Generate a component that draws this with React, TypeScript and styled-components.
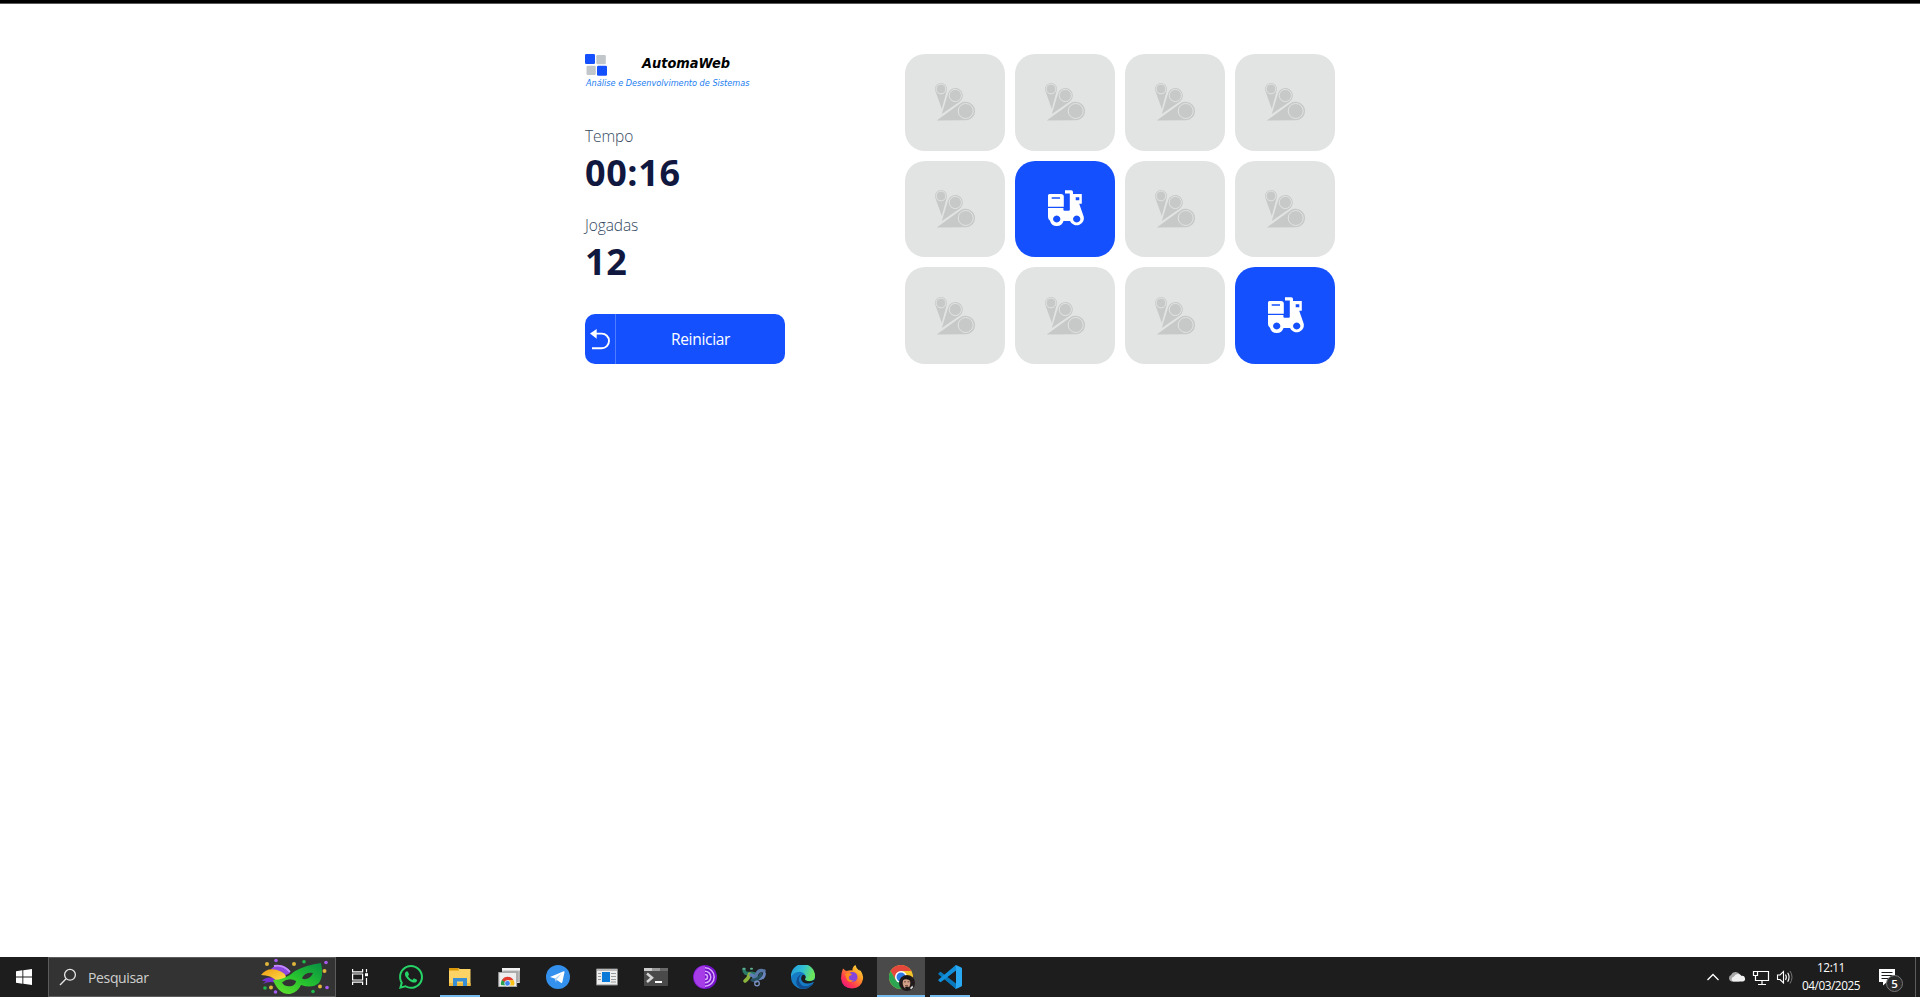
import React from 'react';
import styled, { createGlobalStyle } from 'styled-components';
import { FaWhatsapp } from 'react-icons/fa';

const GlobalStyle = createGlobalStyle`
  * { box-sizing: border-box; }
  body {
    margin: 0;
    background: #fff;
    font-family: 'Open Sans', 'Noto Sans', sans-serif;
    overflow: hidden;
  }
  svg { display: block; flex: none; }
`;

const Screen = styled.div`
  display: flex;
  flex-direction: column;
  height: 997px;
  border-top: 3px solid #000;
`;

const Page = styled.main`
  flex: 1;
  border-top: 1px solid #5a5a5a;
  padding-top: 50px;
`;

const Game = styled.div`
  width: 750px;
  height: 310px;
  margin: 0 auto;
  display: flex;
  justify-content: space-between;
`;

const Info = styled.section`
  width: 200px;
  display: flex;
  flex-direction: column;
`;

const Stats = styled.div`
  flex: 1;
  margin-top: 35px;
`;

const Stat = styled.div`
  height: 89px;
`;

const StatLabel = styled.p`
  margin: 0;
  font-size: 15.5px;
  line-height: 23px;
  font-weight: 300;
  color: #34495e;
  letter-spacing: -0.1px;
`;

const StatValue = styled.p`
  margin: 0;
  font-size: 36px;
  line-height: 49px;
  font-weight: 700;
  color: #101840;
  letter-spacing: 0.6px;
`;

const RestartButton = styled.button`
  display: flex;
  height: 50px;
  width: 200px;
  padding: 0;
  border: 0;
  border-radius: 10px;
  background: #1550ff;
  color: #fff;
  font: 400 15.5px/51px 'Open Sans', 'Noto Sans', sans-serif;
  letter-spacing: -0.3px;
  overflow: hidden;
`;

const ButtonIcon = styled.span`
  width: 31px;
  height: 50px;
  border-right: 1px solid #4f7dff;
  display: flex;
  align-items: center;
`;

const ButtonLabel = styled.span`
  flex: 1;
  text-align: center;
`;

const Board = styled.section`
  display: grid;
  grid-template-columns: repeat(4, 100px);
  grid-template-rows: repeat(3, 1fr);
  gap: 10px;
`;

const Card = styled.div<{ $open: boolean }>`
  display: flex;
  align-items: center;
  justify-content: center;
  border-radius: 20px;
  background: ${(p) => (p.$open ? '#1550ff' : '#e2e4e3')};
`;

const Taskbar = styled.footer`
  display: flex;
  height: 40px;
  background: #1d1d1d;
  color: #fff;
`;

const StartButton = styled.div`
  width: 48px;
  display: flex;
  align-items: center;
  justify-content: center;
`;

const Search = styled.div`
  width: 288px;
  display: flex;
  align-items: center;
  border: 1px solid #5c5c5c;
  background: #333;
  padding: 0 4px 0 10px;
`;

const SearchText = styled.span`
  flex: 1;
  padding-left: 11px;
  font-size: 14px;
  font-weight: 400;
  letter-spacing: -0.35px;
  color: #cfcfcf;
`;

const TaskView = styled.div`
  width: 51px;
  padding-right: 3px;
  display: flex;
  align-items: center;
  justify-content: center;
`;

const Apps = styled.div`
  display: flex;
  gap: 1px;
`;

const TaskbarApp = styled.div<{ $active?: boolean; $running?: boolean }>`
  width: 48px;
  height: 40px;
  display: flex;
  flex-direction: column;
  align-items: center;
  padding-top: 8px;
  background: ${(p) => (p.$active ? '#4a4a4a' : 'transparent')};
  &::after {
    content: '';
    margin-top: 6px;
    height: 2px;
    width: ${(p) => (p.$active ? 48 : 40)}px;
    background: ${(p) => (p.$active || p.$running ? '#76b9ed' : 'transparent')};
  }
`;

const Tray = styled.div`
  margin-left: auto;
  display: flex;
  align-items: center;
`;

const Clock = styled.div`
  width: 72px;
  margin: -3px 0 0 1px;
  text-align: center;
  font-size: 11.8px;
  line-height: 18px;
  letter-spacing: -0.45px;
  white-space: nowrap;
`;

const Notice = styled.div`
  position: relative;
  width: 29px;
  height: 40px;
  margin-left: 9px;
  padding: 11px 0 0 3px;
`;

const NoticeCount = styled.span`
  position: absolute;
  left: 10px;
  top: 18px;
  width: 17px;
  height: 17px;
  border: 1px solid #777;
  border-radius: 50%;
  background: #2b2b2b;
  font-size: 11.5px;
  font-weight: 600;
  line-height: 15px;
  text-align: center;
`;

const DesktopEdge = styled.div`
  width: 5px;
  height: 40px;
  margin-left: 10px;
  border-left: 1px solid #5c5c5c;
`;

const Logo = () => (
  <svg width="200" height="36" viewBox="0 0 200 36">
    <rect x="0" y="0" width="10" height="10" rx="1.3" fill="#1550ff" />
    <rect x="11.3" y="1" width="9.5" height="9.3" rx="1.3" fill="#c1c6cb" />
    <rect x="1.5" y="11.7" width="9.3" height="9.3" rx="1.3" fill="#c1c6cb" />
    <rect x="12" y="11.7" width="10" height="10" rx="1.3" fill="#1550ff" />
    <text x="57" y="13.6" textLength="88" lengthAdjust="spacingAndGlyphs" fontFamily="'DejaVu Sans', sans-serif" fontSize="13.3" fontWeight="700" fontStyle="italic" fill="#000">AutomaWeb</text>
    <text x="1" y="31.8" textLength="163.5" lengthAdjust="spacingAndGlyphs" fontFamily="'DejaVu Sans', sans-serif" fontSize="8" fontStyle="italic" fill="#1a7df0">Análise e Desenvolvimento de Sistemas</text>
  </svg>
);

const UndoIcon = () => (
  <svg width="30" height="50" viewBox="0 0 30 50" fill="none">
    <path d="M9 19.6H16.7a7.2 7.2 0 0 1 0 14.6H7" stroke="#fff" strokeWidth="1.9" />
    <path d="M5 19.6L11.7 15v9.8z" fill="#fff" />
  </svg>
);

const CardBack = () => (
  <svg width="40" height="40" viewBox="0 0 40 40" fill="#c7c9c8">
    <path d="M0.35 9.03A6 6 0 1 1 11.79 8.57L6.8 27z" />
    <path d="M13.13 11.31A7.5 7.5 0 1 1 24.58 19.66L6.8 32z" />
    <path d="M25.2 21.5A9.3 9.3 0 1 1 30.7 38.3L1.7 38.6z" />
    <g fill="none" stroke="#e2e4e3" strokeWidth="1">
      <circle cx="6" cy="7" r="4.9" />
      <circle cx="20.3" cy="13.5" r="6.1" />
      <circle cx="30.7" cy="29" r="7.5" />
    </g>
  </svg>
);

const Scooter = () => (
  <svg width="40" height="40" viewBox="0 0 40 40" fill="#fff">
    <path fillRule="evenodd" d="M4.5 5H16q2.8 0 2.8 2.6V17.7H3V6.5q0-1.5 1.5-1.5zM6.7 8.3v1.5H15V8.3z" />
    <path fillRule="evenodd" d="M20 1.2h6.2q1.8 0 1.8 1.8v2H36.8v9.7H34.2L38.3 26.4A7 7 0 0 1 25 31.9H18.5A7 7 0 0 1 5 31.7Q3 30.6 3 28V19H18.4v1.7q0 1 1 1h4.4q1 0 1-1V4.6H20zM30.7 8.2v3h3.6v-3zM11.7 26.4a3.6 3.6 0 1 0 .01 0zM31.7 26.4a3.6 3.6 0 1 0 .01 0z" />
  </svg>
);

const WindowsIcon = () => (
  <svg width="16" height="16" viewBox="0 0 16 16" fill="#fff">
    <path d="M0 2.2L6.4 1.3V7.5H0zM7.3 1.2L16 0V7.5H7.3zM0 8.4H6.4V14.7L0 13.8zM7.3 8.4H16V16L7.3 14.8z" />
  </svg>
);

const SearchIcon = () => (
  <svg width="18" height="18" viewBox="0 0 18 18" fill="none" stroke="#e6e6e6" strokeWidth="1.3">
    <circle cx="11" cy="6.8" r="5.4" />
    <path d="M7.1 10.8L1 17" />
  </svg>
);

const MaskIcon = () => (
  <svg width="70" height="38" viewBox="0 0 70 38">
    <defs>
      <linearGradient id="mask" x1="0" y1="1" x2="1" y2="0">
        <stop offset="0" stopColor="#69e52c" />
        <stop offset=".5" stopColor="#27c32f" />
        <stop offset="1" stopColor="#079044" />
      </linearGradient>
      <linearGradient id="plume" x1="0" y1="0" x2="1" y2="1">
        <stop offset="0" stopColor="#f09a12" />
        <stop offset="1" stopColor="#ffe34d" />
      </linearGradient>
    </defs>
    <path d="M10 11Q16 5 23 8 28 10 29 15L20 20z" fill="#8d48df" />
    <path d="M13 8Q22 6 29 14" stroke="#c58bff" strokeWidth="1.8" fill="none" />
    <path d="M1 23Q4 18 14 20L18 26Q9 22 2 26L5 23Q2 23 1 23z" fill="#7630cf" />
    <path d="M0 17Q6 9 16 12T25 21L16 23Q10 17 0 17z" fill="url(#plume)" />
    <path fillRule="evenodd" fill="url(#mask)" d="M12 22Q24 22 34 13 45 7 60 5 63 18 58 25 51 31 40 27 37 34 29 36 18 37 12 22zM21 24.5Q24 29.500 31 28 35 26 35 23 28 19 21 24.500zM41 20Q44 14 52 15 50 20 45 21 42 22 41 20z" />
    <g fill="#a65cf0">
      <circle cx="15" cy="2.5" r="1.8" /><circle cx="65" cy="4.5" r="1.8" /><circle cx="66" cy="29.5" r="1.8" /><circle cx="14.5" cy="34" r="1.8" />
    </g>
    <g fill="#e0b63a">
      <circle cx="6" cy="6" r="2" /><circle cx="33" cy="6" r="2" /><circle cx="63.5" cy="13" r="2" /><circle cx="59" cy="28.5" r="2" /><circle cx="10" cy="29.5" r="2" />
    </g>
    <g fill="#20b94b">
      <circle cx="43" cy="3.7" r="1.8" /><circle cx="4" cy="30" r="1.8" /><circle cx="52" cy="33.5" r="1.8" />
    </g>
  </svg>
);

const TaskViewIcon = () => (
  <svg width="17" height="16" viewBox="0 0 17 16" fill="none" stroke="#fff" strokeWidth="1.2">
    <path d="M.6 0V2.8H10.6V0M.6 16V13.2H10.6V16M.6 5H10.6V11H.6zM14.5 0V3.2M14.5 9V16" />
    <path d="M13 4.2h3v3h-3z" fill="#fff" stroke="none" />
  </svg>
);

const ExplorerIcon = () => (
  <svg width="24" height="24" viewBox="0 0 24 24">
    <path d="M1 3H10L12 4H22.5V21H1z" fill="#fcd364" />
    <path d="M1 3H10L11 5.5H1z" fill="#dc9a0b" />
    <path d="M1 18H22.5V21H1z" fill="#f0b93c" />
    <path d="M5 21V13H19V21H15V16.5H9V21z" fill="#3a8fd4" />
  </svg>
);

const RemoteIcon = () => (
  <svg width="24" height="24" viewBox="0 0 24 24">
    <rect x="5.7" y="3.5" width="16.5" height="14" fill="#aaa" stroke="#ddd" />
    <path d="M5 3h18v2.6H5z" fill="#f2f2f2" />
    <rect x="1.8" y="7.5" width="17.8" height="14" fill="#eee" stroke="#aaa" />
    <path d="M4 20a6.5 6.5 0 0 1 3-6.7L10.5 18V20.5z" fill="#2aa14a" />
    <path d="M5 15.3A6.5 6.5 0 0 1 16.5 15.3H10.5L8 17z" fill="#e33b2e" />
    <path d="M12 15.3h4.8A6.5 6.5 0 0 1 17 20.5h-5z" fill="#fbc116" />
    <circle cx="10.5" cy="18.3" r="2.8" fill="#3f83f0" stroke="#fff" strokeWidth=".7" />
  </svg>
);

const TelegramIcon = () => (
  <svg width="24" height="24" viewBox="0 0 24 24">
    <circle cx="12" cy="12" r="12" fill="#3390ec" />
    <path d="M4 12L17.7 6.3Q18.8 6 18.5 7.3L16.3 17.2Q16 18.3 14.9 17.7L8.7 13.5z" fill="#fff" />
    <path d="M8.7 13.5L15.5 8.8 10.7 14.8 10 17.5z" fill="#b9d8f5" />
  </svg>
);

const ReaderIcon = () => (
  <svg width="24" height="24" viewBox="0 0 24 24">
    <path d="M1.5 4H22.5V20H1.5z" fill="#eee" stroke="#888" />
    <path d="M2 4H22V6H2z" fill="#b9b9b9" />
    <path d="M7 7h8v10H7z" fill="#0b79d8" />
    <path d="M3 8.5h3M3 11.5h3M3 14.5h3M16 8.5h5M16 11.5h5M16 14.5h5M16 17h5" stroke="#999" />
  </svg>
);

const TerminalIcon = () => (
  <svg width="24" height="24" viewBox="0 0 24 24">
    <rect y="3" width="24" height="18" rx="1" fill="#4a4a4a" />
    <path d="M0 3h8v3H0z" fill="#ccc" /><path d="M8 3h8v3H8z" fill="#999" /><path d="M16 3h8v3h-8z" fill="#696969" />
    <path d="M3 8.5L8 12.8 3 17" fill="none" stroke="#d6d6d6" strokeWidth="2.5" />
    <path d="M11 16h7v2h-7z" fill="#fff" />
  </svg>
);

const TorIcon = () => (
  <svg width="24" height="24" viewBox="0 0 24 24">
    <circle cx="12" cy="12" r="12" fill="#7413c9" />
    <path d="M12 0.8A11.2 11.2 0 0 0 12 23.2z" fill="#a63ce8" />
    <g fill="none" stroke="#dba8ff" strokeWidth="1.5">
      <path d="M12 2.8a9.2 9.2 0 0 1 0 18.4" /><path d="M12 6.2a5.8 5.8 0 0 1 0 11.6" /><path d="M12 9.5a2.5 2.5 0 0 1 0 5" />
    </g>
  </svg>
);

const KnotIcon = () => (
  <svg width="24" height="24" viewBox="0 0 24 24" fill="none" strokeLinecap="round">
    <path d="M2 4.5Q2 9.5 8 8.5T15 13" stroke="#2b7a66" strokeWidth="3.6" />
    <path d="M7.5 9Q7 13 3 16" stroke="#8bb43c" strokeWidth="3.6" />
    <path d="M9 10Q12 10 14 16" stroke="#5d7eb8" strokeWidth="3.6" />
    <path d="M22 6Q17 4.5 15 8.5T11 15" stroke="#5878a8" strokeWidth="3.4" />
    <path d="M22.5 8.5Q22 14 16 14" stroke="#6885bd" strokeWidth="2.8" />
    <path d="M19 9Q17 15 10 15" stroke="#27505f" strokeWidth="3" />
    <circle cx="15" cy="18.5" r="2.3" stroke="#7c94c4" strokeWidth="1.3" />
    <path d="M1.5 3.8h1M9 3.8h1" stroke="#5cb090" strokeWidth="2" />
  </svg>
);

const EdgeIcon = () => (
  <svg width="24" height="24" viewBox="0 0 24 24">
    <defs>
      <linearGradient id="edgeTop" x1="0" y1="0" x2="1" y2=".3">
        <stop stopColor="#2295df" /><stop offset=".55" stopColor="#32c1d2" /><stop offset="1" stopColor="#6be65b" />
      </linearGradient>
    </defs>
    <circle cx="12" cy="12" r="12" fill="#167bc5" />
    <path d="M0 11A12 12 0 0 1 24 11Q24 16 18.5 16 14 16 14 14 15.5 12 14.5 10.5 12 6 6.5 7 2 8 0 12z" fill="url(#edgeTop)" />
    <path d="M9 11Q6 16 10.5 20 15 23 22 18.5 17 25 10 23.5 3 20 6.5 12.5 8 9.5 11 9 9.5 10 9 11z" fill="#104e91" />
    <path d="M11.5 10Q8.5 14 12 17.3 16 20 22.5 17L25 18V13.5Q22 16.2 18.5 16.2 13.5 16 14 14 15.5 12 13.5 10z" fill="#1d1d1d" />
  </svg>
);

const FirefoxIcon = () => (
  <svg width="24" height="24" viewBox="0 0 24 24">
    <defs>
      <linearGradient id="fox" x1="1" y1="0" x2=".2" y2="1">
        <stop stopColor="#fff04a" /><stop offset=".4" stopColor="#ff9a24" /><stop offset=".75" stopColor="#ff3850" /><stop offset="1" stopColor="#e81581" />
      </linearGradient>
    </defs>
    <path d="M3 3.5L6 6 9 5.5Q11 5 12.5 5.5 12 2 15.5 0 16 3.5 19.5 6V4.5Q23.5 9 23 14 21.5 23 12 23.5 2 23 1 13.5 1 8 3 3.5z" fill="url(#fox)" />
    <circle cx="12.5" cy="12" r="5" fill="#8544db" />
    <path d="M5 9Q9 7 12 9.5L9 11.5Q8 16 14 15.5 10 18.5 7 15z" fill="#ff8b20" />
  </svg>
);

const ChromeIcon = () => (
  <svg width="24" height="24" viewBox="0 0 24 24" overflow="visible">
    <circle cx="12" cy="12" r="12" fill="#f5c52a" />
    <path d="M1.6 6A12 12 0 0 1 22.4 6H12L6.8 15z" fill="#e4473c" />
    <path d="M1.6 6A12 12 0 0 0 12 24L17.2 15 6.8 15z" fill="#2da452" />
    <circle cx="12" cy="12" r="6" fill="#fff" /><circle cx="12" cy="12" r="4.5" fill="#2f7be5" />
    <circle cx="18" cy="18" r="8" fill="#211b1c" />
    <ellipse cx="17.5" cy="18" rx="3.8" ry="5.5" fill="#d1a087" />
    <path d="M13.3 15.5Q14 10.8 18 11 22 11.5 21.6 16 19 13.5 15 14.5zM16 22q2-1 4 0l-1 2.5h-2z" fill="#171415" />
    <path d="M15 16.8h2M18.5 16.8h2M16 20.7h3" stroke="#503630" strokeWidth=".8" />
    <path d="M21 23l2.5-2.5 .5 2-2 2z" fill="#ddd" />
  </svg>
);

const CodeIcon = () => (
  <svg width="24" height="24" viewBox="0 0 24 24">
    <path d="M.3 8.5L2 7Q2.5 6.7 3 7L18 18.5V23.7L17 23.3.3 9.2z" fill="#0879bd" />
    <path d="M.3 15.5L2 17Q2.5 17.3 3 17L18 5.5V.3L17 .7.3 14.8z" fill="#1390db" />
    <path d="M17 .7Q17.5 0 18.5 .3L23.3 2.6Q24 3 24 3.8V20.2Q24 21 23.3 21.4L18.5 23.7Q17.5 24 17 23.3L18 22.5V1.5z" fill="#29a9f2" />
  </svg>
);

const TrayIcons = () => (
  <svg width="88" height="20" viewBox="0 0 88 20" fill="none" stroke="#fff">
    <path d="M1.5 13L7 7.5 12.5 13" strokeWidth="1.3" />
    <path d="M25.5 14.5A3.5 3.5 0 0 1 25 8 5 5 0 0 1 34 7.5L38 11 33 14.5z" fill="#a8a8a8" stroke="none" />
    <path d="M27 14.5a2.7 2.7 0 0 1 1-5 4.3 4.3 0 0 1 7.5-.6 2.9 2.9 0 0 1 1.5 5.6z" fill="#f1f1f1" stroke="none" />
    <path d="M52 4.5H62.5V13.5H49.5V9M56 13.5V17M52 17.5H60M47.5 4.5H51.5V8.5H47.5z" strokeWidth="1.2" />
    <path d="M71.5 8V12.5H74L77.5 16V4.5L74 8z" strokeWidth="1.1" />
    <path d="M79.5 7.5Q81.2 10.2 79.5 13M81.7 5.8Q84.5 10.2 81.7 14.7" strokeWidth="1.1" />
    <path d="M84 4Q88 10.2 84 16.5" stroke="#777" />
  </svg>
);

const NoticeIcon = () => (
  <svg width="17" height="18" viewBox="0 0 17 18">
    <path d="M0 1H16V14H8L4 17.5V14H0z" fill="#fff" />
    <path d="M2.5 4.5H13.5M2.5 7.5H13.5M2.5 10.5H10" stroke="#1d1d1d" />
  </svg>
);

const cards = [false, false, false, false, false, true, false, false, false, false, false, true];

export default function App() {
  return (
    <>
      <GlobalStyle />
      <Screen>
        <Page>
          <Game>
            <Info>
              <Logo />
              <Stats>
                <Stat>
                  <StatLabel>Tempo</StatLabel>
                  <StatValue>00:16</StatValue>
                </Stat>
                <Stat>
                  <StatLabel>Jogadas</StatLabel>
                  <StatValue>12</StatValue>
                </Stat>
              </Stats>
              <RestartButton>
                <ButtonIcon><UndoIcon /></ButtonIcon>
                <ButtonLabel>Reiniciar</ButtonLabel>
              </RestartButton>
            </Info>
            <Board>
              {cards.map((open, i) => (
                <Card key={i} $open={open}>{open ? <Scooter /> : <CardBack />}</Card>
              ))}
            </Board>
          </Game>
        </Page>
        <Taskbar>
          <StartButton><WindowsIcon /></StartButton>
          <Search>
            <SearchIcon />
            <SearchText>Pesquisar</SearchText>
            <MaskIcon />
          </Search>
          <TaskView><TaskViewIcon /></TaskView>
          <Apps>
            <TaskbarApp><FaWhatsapp size={24} viewBox="0 32 448 448" color="#25d366" /></TaskbarApp>
            <TaskbarApp $running><ExplorerIcon /></TaskbarApp>
            <TaskbarApp><RemoteIcon /></TaskbarApp>
            <TaskbarApp><TelegramIcon /></TaskbarApp>
            <TaskbarApp><ReaderIcon /></TaskbarApp>
            <TaskbarApp><TerminalIcon /></TaskbarApp>
            <TaskbarApp><TorIcon /></TaskbarApp>
            <TaskbarApp><KnotIcon /></TaskbarApp>
            <TaskbarApp><EdgeIcon /></TaskbarApp>
            <TaskbarApp><FirefoxIcon /></TaskbarApp>
            <TaskbarApp $active><ChromeIcon /></TaskbarApp>
            <TaskbarApp $running><CodeIcon /></TaskbarApp>
          </Apps>
          <Tray>
            <TrayIcons />
            <Clock>
              <div>12:11</div>
              <div>04/03/2025</div>
            </Clock>
            <Notice>
              <NoticeIcon />
              <NoticeCount>5</NoticeCount>
            </Notice>
            <DesktopEdge />
          </Tray>
        </Taskbar>
      </Screen>
    </>
  );
}
